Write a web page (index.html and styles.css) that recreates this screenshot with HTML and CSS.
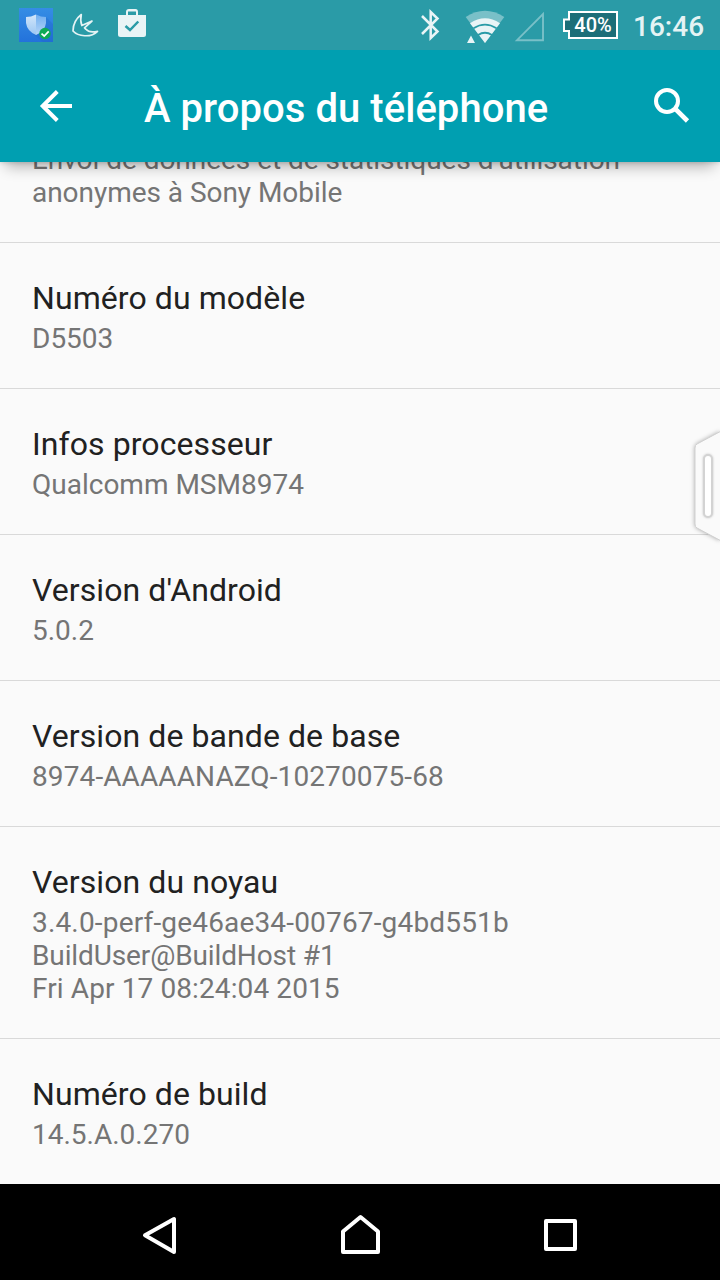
FILE: index.html
```html
<!DOCTYPE html>
<html lang="fr">
<head>
<meta charset="utf-8">
<title>À propos du téléphone</title>
<link rel="stylesheet" href="styles.css">
</head>
<body>
<div class="screen">
  <div class="status">
    <svg class="status-icons" width="180" height="50" viewBox="0 0 180 50">
      <defs>
        <linearGradient id="tile" x1="0" y1="0" x2="0" y2="1"><stop offset="0" stop-color="#358de5"/><stop offset="1" stop-color="#2372db"/></linearGradient>
        <linearGradient id="shieldL" x1="0" y1="0" x2="0" y2="1"><stop offset="0" stop-color="#d2e6fa"/><stop offset="1" stop-color="#9bc6f3"/></linearGradient>
        <linearGradient id="shieldR" x1="0" y1="0" x2="0" y2="1"><stop offset="0" stop-color="#70aef0"/><stop offset="1" stop-color="#b5d5f7"/></linearGradient>
      </defs>
      <rect x="19" y="8" width="34" height="34" fill="url(#tile)"/>
      <path d="M46 17L53 24V42H43L33 34Z" fill="#1d62c5" opacity=".3"/>
      <path d="M36 14.500Q31 17 26 17V23Q27 31 36 35Z" fill="url(#shieldL)"/>
      <path d="M36 14.500Q41 17 46 17V23Q45 31 36 35Z" fill="url(#shieldR)"/>
      <circle cx="45" cy="33.500" r="5.700" fill="#0eaa54"/>
      <path d="M41.500 33.700L44.200 36L48.700 31.300" fill="none" stroke="#fff" stroke-width="1.700"/>
      <path d="M81.300 14.500C75.500 19 73 25 73 31C78 36.500 91 38 97.500 31.300C92 32.500 88 31.700 86 29.300L84.500 27.800L92 21L81.800 25.500C80.500 22 80.500 18 81.300 14.500Z" fill="none" stroke="#e5f3f4" stroke-width="1.700" stroke-linejoin="round"/>
      <path fill-rule="evenodd" fill="#e9f4f6" d="M118 15H126V12Q126 9 129 9H135.500Q138 9 138 12V15H146V34.500Q146 37 143.500 37H120.500Q118 37 118 34.500ZM128 15H136V11.500H128Z"/>
      <path d="M125.500 26L130 30L138.300 21.500" fill="none" stroke="#2a9ba7" stroke-width="2.500"/>
    </svg>
    <div class="status-right">
      <svg class="status-icons" width="160" height="50" viewBox="400 0 160 50">
        <path d="M422 16L437.500 31.500L430.700 38V12L437.500 18.500L422 34" fill="none" stroke="#e9f4f6" stroke-width="2.500"/>
        <path d="M465.700 17Q485 4.500 504.300 17L485 43Z" fill="#79c0c8"/>
        <path d="M470 23.200Q485 13.500 500 23.200L485 43Z" fill="#e9f4f6"/>
        <path d="M473.500 28.300Q485 21 496.500 28.300M478 35Q485 30.500 492 35" fill="none" stroke="#2a9ba7" stroke-width="1.800"/>
        <path d="M471 35.500L475 43H467Z" fill="#e9f4f6"/>
        <path d="M517 40.200H543V14Z" fill="none" stroke="#79c0c8" stroke-width="1.900"/>
      </svg>
      <div class="battery">
        <svg class="battery-shell" width="55" height="28" viewBox="0 0 55 28"><path d="M6 1H54V27H6V20H1V8.500H6Z" fill="#1c6e78" stroke="#fff" stroke-width="2"/></svg>
        <span class="battery-text">40%</span>
      </div>
      <span class="clock">16:46</span>
    </div>
  </div>
  <header class="appbar">
    <svg class="back" width="40" height="40" viewBox="36 86 40 40"><path d="M72 106H43M57.300 91.500L42.700 106L57.300 120.500" fill="none" stroke="#fff" stroke-width="4"/></svg>
    <h1 class="heading">À propos du téléphone</h1>
    <svg class="search" width="40" height="40" viewBox="650 86 40 40"><circle cx="667" cy="101" r="11" fill="none" stroke="#fff" stroke-width="4"/><path d="M674.500 109L676 109.500L687.500 121" fill="none" stroke="#fff" stroke-width="4.600"/></svg>
  </header>
  <main class="list">
    <div class="row partial"><p class="summary snug">Envoi de données et de statistiques d'utilisation<br>anonymes à Sony Mobile</p></div>
    <div class="row"><h2 class="title">Numéro du modèle</h2><p class="summary">D5503</p></div>
    <div class="row"><h2 class="title">Infos processeur</h2><p class="summary">Qualcomm MSM8974</p></div>
    <div class="row"><h2 class="title">Version d'Android</h2><p class="summary">5.0.2</p></div>
    <div class="row"><h2 class="title">Version de bande de base</h2><p class="summary code">8974-AAAAANAZQ-10270075-68</p></div>
    <div class="row"><h2 class="title">Version du noyau</h2><p class="summary"><span class="kernel">3.4.0-perf-ge46ae34-00767-g4bd551b</span><br><span class="host">BuildUser@BuildHost #1</span><br><span class="code">Fri Apr 17 08:24:04 2015</span></p></div>
    <div class="row last"><h2 class="title">Numéro de build</h2><p class="summary">14.5.A.0.270</p></div>
  </main>
  <nav class="navbar">
    <svg width="40" height="40" viewBox="140 1215 40 40"><path d="M145 1235.300L174 1219V1252Z"/></svg>
    <svg width="44" height="44" viewBox="338 1213 44 44"><path d="M343 1252V1231.500L360.500 1217L378 1231.500V1252Z"/></svg>
    <svg width="40" height="40" viewBox="540 1215 40 40"><path d="M546 1221H575V1249H546Z"/></svg>
  </nav>
  <svg class="handle" width="40" height="130" viewBox="680 420 40 130">
    <path class="handle-body" d="M725 429L697 444Q695 445 695 448V524Q695 527 697 528L725 543Z"/>
    <rect class="handle-grip" x="704" y="455" width="8" height="62" rx="4"/>
  </svg>
</div>
</body>
</html>
```
FILE: styles.css
```css
* { box-sizing: border-box; }
body { margin: 0; font-family: Roboto, "Noto Sans", sans-serif; }
.screen { position: relative; width: 720px; height: 1280px; overflow: hidden; display: flex; flex-direction: column; background: #fafafa; }
.status { height: 50px; flex: none; display: flex; justify-content: space-between; background: #2a9ba7; position: relative; z-index: 3; }
.status-icons { display: block; flex: none; }
.status-right { display: flex; align-items: center; width: 320px; }
.battery { position: relative; width: 55px; height: 28px; margin-left: 3px; }
.battery-shell { display: block; }
.battery-text { position: absolute; left: 7px; right: 2px; top: 0; text-align: center; font-size: 20px; line-height: 28px; font-weight: 500; color: #fff; }
.clock { margin-left: 15px; padding-top: 3px; font-size: 28px; font-weight: 500; line-height: 34px; color: #e5f3f4; }
.appbar { height: 112px; flex: none; display: flex; align-items: center; padding: 0 30px 0 36px; background: #009fb1; color: #fff; position: relative; z-index: 2; box-shadow: 0 10px 14px -6px rgba(0,0,0,.32), 0 1px 4px rgba(0,0,0,.12); }
.back { flex: none; }
.heading { flex: 1; margin: 6px 0 0 68px; font-size: 40px; font-weight: 500; line-height: 48px; letter-spacing: .05px; white-space: nowrap; }
.search { flex: none; }
.list { flex: 1; min-height: 0; margin-top: -19px; }
.row { padding: 35px 32px 33px; border-bottom: 1px solid #d9d9d9; }
.partial { padding-top: 0; }
.last { border-bottom: 0; }
.title { margin: 0 0 4px; font-size: 32px; line-height: 40px; font-weight: 400; letter-spacing: .08px; color: #212121; }
.summary { margin: 0; font-size: 28px; line-height: 33px; color: #757575; white-space: nowrap; }
.snug { letter-spacing: -.04px; }
.code { letter-spacing: .11px; }
.kernel { letter-spacing: .17px; }
.host { letter-spacing: -.12px; }
.navbar { height: 96px; flex: none; display: flex; align-items: center; justify-content: space-between; padding: 5px 140px 0; background: #000; position: relative; }
.navbar path { fill: none; stroke: #fff; stroke-width: 4; stroke-linejoin: round; }
.handle { position: absolute; right: 0; top: 420px; filter: drop-shadow(0 0 2px rgba(0,0,0,.3)); }
.handle-body { fill: #fafafa; stroke: #d0d0d0; stroke-width: 1; }
.handle-grip { fill: #fff; stroke: #d3d3d3; stroke-width: 2; filter: drop-shadow(0 0 1px rgba(0,0,0,.2)); }
```
